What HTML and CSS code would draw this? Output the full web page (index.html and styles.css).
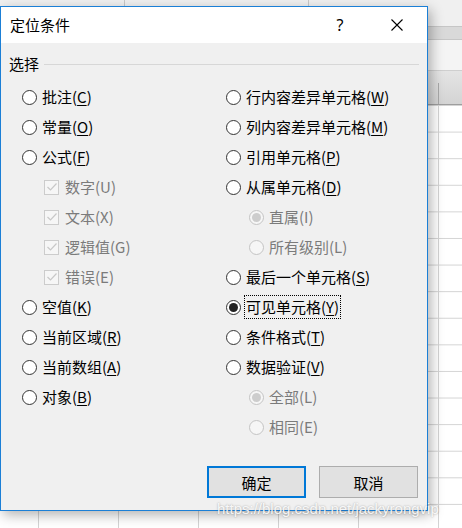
FILE: index.html
```html
<!DOCTYPE html>
<html lang="zh-CN">
<head>
<meta charset="utf-8">
<title>定位条件</title>
<link rel="stylesheet" href="styles.css">
</head>
<body>
<div class="desk">
  <div class="sheet">
    <div class="s-top"></div>
    <div class="s-band"></div>
    <div class="s-formula"></div>
    <div class="s-colhdr"></div>
    <div class="s-cells"></div>
  </div>

  <div class="dialog">
    <div class="titlebar">
      <span class="title">定位条件</span>
      <span class="help">?</span>
      <span class="close">
        <svg width="12" height="12" viewBox="0 0 12 12"><path d="M0.5 0.5 L11.5 11.5 M11.5 0.5 L0.5 11.5" stroke="#000" stroke-width="1.1" fill="none"/></svg>
      </span>
    </div>
    <div class="body">
      <div class="group-head"><span class="group-label">选择</span><span class="rule"></span></div>
      <div class="options">
        <div class="col">
          <div class="row"><span class="radio"></span><span class="lbl">批注(<u>C</u>)</span></div>
          <div class="row"><span class="radio"></span><span class="lbl">常量(<u>O</u>)</span></div>
          <div class="row"><span class="radio"></span><span class="lbl">公式(<u>F</u>)</span></div>
          <div class="row sub dis"><span class="check"><svg width="12" height="12" viewBox="0 0 12 12"><path d="M1.5 6 L4.5 9 L10.5 2.5" stroke="#c8c8c8" stroke-width="1.2" fill="none"/></svg></span><span class="lbl">数字(U)</span></div>
          <div class="row sub dis"><span class="check"><svg width="12" height="12" viewBox="0 0 12 12"><path d="M1.5 6 L4.5 9 L10.5 2.5" stroke="#c8c8c8" stroke-width="1.2" fill="none"/></svg></span><span class="lbl">文本(X)</span></div>
          <div class="row sub dis"><span class="check"><svg width="12" height="12" viewBox="0 0 12 12"><path d="M1.5 6 L4.5 9 L10.5 2.5" stroke="#c8c8c8" stroke-width="1.2" fill="none"/></svg></span><span class="lbl">逻辑值(G)</span></div>
          <div class="row sub dis"><span class="check"><svg width="12" height="12" viewBox="0 0 12 12"><path d="M1.5 6 L4.5 9 L10.5 2.5" stroke="#c8c8c8" stroke-width="1.2" fill="none"/></svg></span><span class="lbl">错误(E)</span></div>
          <div class="row"><span class="radio"></span><span class="lbl">空值(<u>K</u>)</span></div>
          <div class="row"><span class="radio"></span><span class="lbl">当前区域(<u>R</u>)</span></div>
          <div class="row"><span class="radio"></span><span class="lbl">当前数组(<u>A</u>)</span></div>
          <div class="row"><span class="radio"></span><span class="lbl">对象(<u>B</u>)</span></div>
        </div>
        <div class="col">
          <div class="row"><span class="radio"></span><span class="lbl">行内容差异单元格(<u>W</u>)</span></div>
          <div class="row"><span class="radio"></span><span class="lbl">列内容差异单元格(<u>M</u>)</span></div>
          <div class="row"><span class="radio"></span><span class="lbl">引用单元格(<u>P</u>)</span></div>
          <div class="row"><span class="radio"></span><span class="lbl">从属单元格(<u>D</u>)</span></div>
          <div class="row sub2 dis"><span class="radio on"></span><span class="lbl">直属(I)</span></div>
          <div class="row sub2 dis"><span class="radio"></span><span class="lbl">所有级别(L)</span></div>
          <div class="row"><span class="radio"></span><span class="lbl">最后一个单元格(<u>S</u>)</span></div>
          <div class="row"><span class="radio on"></span><span class="lbl focus">可见单元格(<u>Y</u>)</span></div>
          <div class="row"><span class="radio"></span><span class="lbl">条件格式(<u>T</u>)</span></div>
          <div class="row"><span class="radio"></span><span class="lbl">数据验证(<u>V</u>)</span></div>
          <div class="row sub2 dis"><span class="radio on"></span><span class="lbl">全部(L)</span></div>
          <div class="row sub2 dis"><span class="radio"></span><span class="lbl">相同(E)</span></div>
        </div>
      </div>
      <div class="buttons">
        <button class="btn primary">确定</button>
        <button class="btn">取消</button>
      </div>
    </div>
  </div>

  <div class="watermark">https://blog.csdn.net/jackyrongvip</div>
</div>
</body>
</html>
```

FILE: styles.css
```css
* { box-sizing: border-box; }
html, body { margin: 0; padding: 0; }
body {
  width: 462px;
  height: 528px;
  overflow: hidden;
  font-family: "Noto Sans CJK SC", "Noto Sans", sans-serif;
  font-size: 15px;
  color: #000;
}
.desk {
  position: relative;
  width: 462px;
  height: 528px;
  background: #fff;
}

/* spreadsheet behind the dialog */
.sheet {
  display: flex;
  flex-direction: column;
  width: 462px;
  height: 528px;
}
.s-top {
  height: 26px;
  background-color: #f0f0f0;
  background-image:
    linear-gradient(to right, transparent 124px, #c8c8c8 124px, #c8c8c8 125px, transparent 125px),
    linear-gradient(to right, transparent 308px, #c8c8c8 308px, #c8c8c8 309px, transparent 309px);
}
.s-band {
  height: 14px;
  background: #d9d9d9;
  border-top: 1px solid #c6c6c6;
  border-bottom: 1px solid #c6c6c6;
}
.s-formula {
  height: 30px;
  background: #f4f4f4;
}
.s-colhdr {
  height: 35px;
  border-top: 1px solid #cfcfcf;
  border-bottom: 1px solid #9e9e9e;
  background-image:
    linear-gradient(to right, transparent 438px, #a8a8a8 438px, #a8a8a8 439px, transparent 439px),
    linear-gradient(#e4e4e4, #d4d4d4);
  background-size: 100% 22px, 100% 100%;
  background-position: 0 12px, 0 0;
  background-repeat: no-repeat;
}
.s-cells {
  flex: 1;
  background-color: #fff;
  background-image:
    linear-gradient(to right, #d4d4d4 1px, transparent 1px),
    linear-gradient(to bottom, #d4d4d4 1px, transparent 1px);
  background-size: 80px 100%, 100% 26.6px;
  background-position: 38px 0, 0 0;
}

/* dialog window */
.dialog {
  position: absolute;
  left: 0;
  top: 6px;
  width: 428px;
  height: 505px;
  border: 1px solid #1b7fd6;
  background: #f0f0f0;
  box-shadow: 3px 4px 12px rgba(0, 0, 0, 0.3);
  display: flex;
  flex-direction: column;
}
.titlebar {
  height: 36px;
  background: #fff;
  display: flex;
  align-items: center;
  padding: 0 7px 0 9px;
}
.title {
  flex: 1;
  line-height: 20px;
}
.help {
  width: 20px;
  text-align: center;
  line-height: 20px;
  font-family: "Noto Sans", sans-serif;
  font-size: 16px;
  margin-right: 24px;
}
.close {
  width: 46px;
  height: 20px;
  display: flex;
  align-items: center;
  justify-content: center;
}

.body {
  flex: 1;
  display: flex;
  flex-direction: column;
  padding: 0 8px 12px 8px;
}
.group-head {
  margin-top: 11px;
  height: 20px;
  display: flex;
  align-items: center;
}
.group-label {
  line-height: 20px;
}
.rule {
  flex: 1;
  height: 1px;
  background: #d7d7d7;
  margin-left: 5px;
}
.options {
  margin-top: 8px;
  display: grid;
  grid-template-columns: 204px 1fr;
  padding-left: 13px;
}
.col {
  display: flex;
  flex-direction: column;
}
.row {
  height: 30px;
  display: flex;
  align-items: center;
}
.lbl {
  line-height: 20px;
  white-space: nowrap;
}
.lbl u {
  text-decoration-thickness: 1px;
  text-underline-offset: 2px;
}
.row.sub { padding-left: 22px; }
.row.sub2 { padding-left: 23px; }
.row.dis .lbl { color: #7b7b7b; }

.radio {
  width: 15px;
  height: 15px;
  border: 1px solid #333;
  border-radius: 50%;
  background: #fff;
  margin-right: 5px;
  flex: none;
  display: flex;
  align-items: center;
  justify-content: center;
}
.radio.on::after {
  content: "";
  width: 9px;
  height: 9px;
  border-radius: 50%;
  background: #222;
}
.row.dis .radio {
  border-color: #c4c4c4;
  background: #f6f6f6;
}
.row.dis .radio.on::after {
  background: #cdcdcd;
}
.check {
  width: 15px;
  height: 15px;
  border: 1px solid #cccccc;
  background: #f6f6f6;
  margin-right: 6px;
  flex: none;
  display: flex;
  align-items: center;
  justify-content: center;
}
.focus {
  outline: 1px dotted #000;
  outline-offset: 1px;
}

.buttons {
  margin-top: auto;
  display: flex;
  justify-content: flex-end;
  gap: 13px;
  padding-right: 1px;
}
.btn {
  width: 99px;
  height: 32px;
  background: #e1e1e1;
  border: 1px solid #adadad;
  font-family: "Noto Sans CJK SC", sans-serif;
  font-size: 15px;
  color: #000;
  padding: 0;
}
.btn.primary {
  border: 2px solid #0078d7;
}

.watermark {
  position: absolute;
  left: 217px;
  top: 500px;
  font-family: "Liberation Sans", Arial, sans-serif;
  font-size: 15px;
  color: rgba(255, 255, 255, 0.9);
  text-shadow: 0 0 2px rgba(0, 0, 0, 0.35);
  white-space: nowrap;
}
```
